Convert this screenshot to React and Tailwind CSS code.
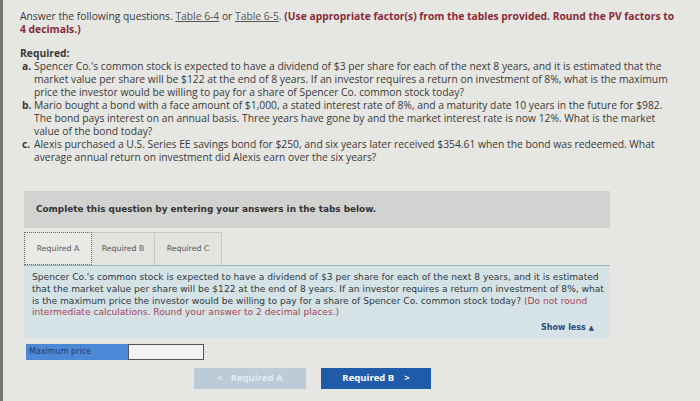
import React from 'react';

const sans = { fontFamily: '"Open Sans", Lato, sans-serif' };
const verdana = { fontFamily: '"DejaVu Sans", Verdana, sans-serif' };

function Item({ letter, children }) {
  return (
    <div className="flex">
      <span className="w-[12px] shrink-0 font-bold">{letter}</span>
      <span>{children}</span>
    </div>
  );
}

export default function App() {
  return (
    <div className="w-[700px] h-[401px] overflow-hidden bg-[#e6e6e2] border-l-[3px] border-[#777] text-[#3a3a3a]" style={sans}>
      <div className="pl-[17px] pr-[20px] pt-[10px] text-[10.3px] leading-[13px]">
        <p>
          Answer the following questions. <span className="underline text-[#555]">Table 6-4</span> or{' '}
          <span className="underline text-[#555]">Table 6-5</span>.{' '}
          <span className="font-bold text-[#8a2a3a]">(Use appropriate factor(s) from the tables provided. Round the PV factors to 4 decimals.)</span>
        </p>
        <p className="mt-[11px] font-bold">Required:</p>
        <div className="pl-[2px] pr-[6px]">
          <Item letter="a.">
            Spencer Co.'s common stock is expected to have a dividend of $3 per share for each of the next 8 years, and it is estimated that the market value per share will be $122 at the end of 8 years. If an investor requires a return on investment of 8%, what is the maximum price the investor would be willing to pay for a share of Spencer Co. common stock today?
          </Item>
          <Item letter="b.">
            Mario bought a bond with a face amount of $1,000, a stated interest rate of 8%, and a maturity date 10 years in the future for $982. The bond pays interest on an annual basis. Three years have gone by and the market interest rate is now 12%. What is the market value of the bond today?
          </Item>
          <Item letter="c.">
            Alexis purchased a U.S. Series EE savings bond for $250, and six years later received $354.61 when the bond was redeemed. What average annual return on investment did Alexis earn over the six years?
          </Item>
        </div>
      </div>

      <div className="ml-[21px] w-[586px] mt-[27px]" style={verdana}>
        <div className="h-[37px] bg-[#d2d3d0] flex items-center pl-[12px] text-[8.9px] font-bold text-[#333]">
          Complete this question by entering your answers in the tabs below.
        </div>

        <div className="mt-[4px] flex h-[33px] text-[7.8px] text-[#555]">
          <div className="w-[68px] flex items-center justify-center border border-dotted border-[#666] bg-[#e9e9e6]">
            Required A
          </div>
          <div className="w-[63px] flex items-center justify-center border-t border-r border-[#c9c9c6] bg-[#e3e3df]">
            Required B
          </div>
          <div className="w-[67px] flex items-center justify-center border-t border-r border-[#c9c9c6] bg-[#e3e3df]">
            Required C
          </div>
        </div>

        <div className="h-[73px] bg-[#d5e2e6] border-t border-[#9fb3bb] pl-[8px] pr-[3px] pt-[6px] text-[9.1px] leading-[11.8px] text-[#2f3a40] relative">
          <p>
            Spencer Co.'s common stock is expected to have a dividend of $3 per share for each of the next 8 years, and it is estimated that the market value per share will be $122 at the end of 8 years. If an investor requires a return on investment of 8%, what is the maximum price the investor would be willing to pay for a share of Spencer Co. common stock today?{' '}
            <span className="text-[#a2455a]">(Do not round intermediate calculations. Round your answer to 2 decimal places.)</span>
          </p>
          <div className="absolute right-[16px] bottom-[3px] text-[8px] font-bold text-[#2c4a7a]">
            Show less <span className="text-[7px]">▲</span>
          </div>
        </div>

        <div className="mt-[6px] flex h-[16px] text-[8px]">
          <div className="w-[102px] ml-[2px] bg-[#4d88d6] text-[#1d3c6b] pl-[3px] flex items-center">Maximum price</div>
          <div className="w-[76px] bg-[#f2f2f0] border border-[#555]" />
        </div>
      </div>

      <div className="mt-[8px] flex ml-[191px] gap-[15px] text-[9.5px] font-bold" style={sans}>
        <div className="w-[112px] h-[21px] bg-[#bccbd8] text-[#e4ebf2] flex items-center justify-center gap-[8px]">
          <span>&lt;</span>
          <span>Required A</span>
        </div>
        <div className="w-[110px] h-[21px] bg-[#1f5ba8] text-white flex items-center justify-center gap-[10px]">
          <span>Required B</span>
          <span>&gt;</span>
        </div>
      </div>
    </div>
  );
}
